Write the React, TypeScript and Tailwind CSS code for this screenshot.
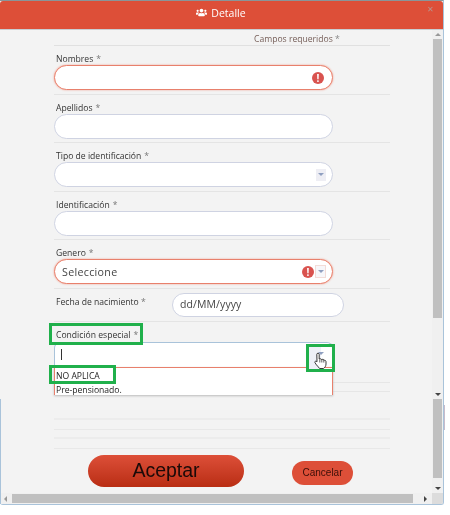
import { FaUsers } from "react-icons/fa";

const font = { fontFamily: '"Open Sans", "Noto Sans", sans-serif' };

function Arrow({ light }: { light?: boolean }) {
  return (
    <span className={`flex h-[12px] w-[10px] items-center justify-center ${light ? "bg-[#eeeef4]" : ""}`}>
      <span className="h-0 w-0 border-x-[3px] border-t-[3px] border-x-transparent border-t-[#8f9fc0]" />
    </span>
  );
}

function Alert() {
  return (
    <span className="flex h-[12px] w-[12px] items-center justify-center rounded-full bg-[#d9534f] text-[10px] font-bold leading-none text-white">
      !
    </span>
  );
}

function Input({ error, children }: { error?: boolean; children?: React.ReactNode }) {
  return (
    <div
      className={`flex h-[25px] w-[279px] items-center justify-end rounded-[13px] border bg-white pr-[6px] ${
        error ? "border-[#e8806c] shadow-[0_0_2px_#ef9a8a]" : "border-[#cfd3e2]"
      }`}
    >
      {children}
    </div>
  );
}

function Row({ label, children }: { label: string; children: React.ReactNode }) {
  return (
    <div className="flex h-[48.6px] flex-col border-b border-[#e4e4e4]">
      <div className="flex h-[19px] items-end pl-[2px] text-[8.6px] leading-[12px] text-[#333]">
        {label} <span className="ml-[3px] text-[#777]">*</span>
      </div>
      {children}
    </div>
  );
}

function VArrow({ down }: { down?: boolean }) {
  return (
    <div className="flex h-[9px] items-center justify-center">
      <span
        className={`h-0 w-0 border-x-[3px] border-x-transparent ${
          down ? "border-t-[3px] border-t-[#444]" : "border-b-[3px] border-b-[#999]"
        }`}
      />
    </div>
  );
}

export default function App() {
  return (
    <div className="relative h-[515px] w-[450px] overflow-hidden bg-white blur-[0.4px]" style={font}>
      <div className="flex h-[505px] w-[444px] flex-col overflow-hidden rounded-b-[3px] border-b border-r border-t border-b-[#a9c3da] border-r-[#a9c3da] border-t-[#8a9599] bg-[#f3f3f3]">
        <div className="relative flex h-[29px] shrink-0 items-center justify-center rounded-t-[3px] border-b border-b-[#c9ced2] bg-[#dd4f38] pb-[2px] pr-[1px] text-[10.5px] text-white">
          <FaUsers className="mr-[4px] mt-[-3px] h-[11px] w-[11px]" />
          <span>Detalle</span>
          <span className="absolute right-[9px] top-[4px] text-[8px] leading-none text-[#b9938c]">✕</span>
        </div>

        <div className="flex min-h-0 flex-1">
          <div className="min-w-0 flex-1 pl-[54px] pr-[42px]">
            <div className="h-[16px] border-b border-[#e0e0e0] pl-[200px] text-[8.6px] leading-[18px] text-[#77605a]">
              Campos requeridos <span className="text-[#888]">*</span>
            </div>

            <Row label="Nombres">
              <Input error>
                <Alert />
                <span className="w-[2px]" />
              </Input>
            </Row>
            <Row label="Apellidos">
              <Input />
            </Row>
            <Row label="Tipo de identificación">
              <Input>
                <Arrow light />
              </Input>
            </Row>
            <Row label="Identificación">
              <Input />
            </Row>
            <Row label="Genero">
              <Input error>
                <span className="flex-1 pl-[7px] text-[10.7px] leading-[20px] tracking-[0.3px] text-[#444]">Seleccione</span>
                <Alert />
                <span className="ml-[1px] flex h-[13px] w-[11px] items-center justify-center border border-[#f3dcd8] bg-[#f7f7fa]">
                  <Arrow />
                </span>
              </Input>
            </Row>

            <div className="flex h-[33px] items-start border-b border-[#e4e4e4] pl-[2px]">
              <span className="mt-[7px] w-[116px] text-[8.6px] leading-[12px] text-[#333]">
                Fecha de nacimiento <span className="text-[#777]">*</span>
              </span>
              <div className="mt-[4px] flex h-[24px] w-[172px] items-center rounded-[12px] border border-[#cfd3e2] bg-white pl-[7px] text-[10.5px] tracking-[0.1px] text-[#444]">
                dd/MM/yyyy
              </div>
            </div>

            <div className="relative h-[61px] border-b border-[#e6e6e6]">
              <div className="flex h-[19px] items-end pl-[2px] text-[8.6px] leading-[12px] text-[#333]">
                Condición especial <span className="ml-[3px] text-[#777]">*</span>
              </div>
              <div className="mt-[1px] h-[25px] w-[279px] rounded-t-[6px] border border-b-0 border-[#a9c3da] bg-white pl-[6px] pt-[6px]">
                <div className="h-[11px] w-px bg-[#333]" />
              </div>
              <div className="absolute left-0 top-[45px] z-10 h-[28px] w-[279px] border-x border-t border-x-[#e8806c] border-t-[#e8806c] bg-white pl-[1px] pt-px text-[8.6px] leading-[14px] text-[#222] shadow-[0_1px_2px_#bbb]">
                <div>NO APLICA</div>
                <div>Pre-pensionado.</div>
              </div>
              {/* green highlights */}
              <div className="absolute left-[-5px] top-[1px] h-[22px] w-[94px] border-[3px] border-[#20b04b]" />
              <div className="absolute left-[-5px] top-[43px] z-20 h-[19px] w-[67px] border-[3px] border-[#20b04b]" />
              <div className="absolute left-[252px] top-[22px] z-20 h-[28px] w-[29px] border-[3px] border-[#20b04b]">
                <div className="absolute left-[0px] top-0 h-full w-[12px] bg-[#eef1f8]" />
                <div className="absolute left-[7px] top-[1px]">
                  <Arrow />
                </div>
                <svg className="absolute left-[5px] top-[5px]" width="14" height="17" viewBox="0 0 14 17">
                  <path
                    d="M4 1.2c.7 0 1.2.5 1.2 1.2V7l1-.2c.5 0 1 .2 1.2.6.5-.3 1.3-.2 1.6.3.6-.2 1.3 0 1.6.6.7 0 1.4.5 1.4 1.3v2.4c0 2-1 3.5-2.6 4.5H5.6c-.6-1-2-2.2-3.2-3.7L1 10.7c-.4-.6 0-1.4.6-1.5.5-.1 1 .1 1.4.6l-.2-7.4c0-.7.5-1.2 1.2-1.2z"
                    fill="#fff"
                    stroke="#222"
                    strokeWidth="0.9"
                  />
                  <path d="M5.8 7.5v3M7.8 7.5v3M9.8 8v2.6" stroke="#222" strokeWidth="0.7" fill="none" />
                </svg>
              </div>
            </div>

            <div className="h-[9px] border-b border-[#e6e6e6]" />
            <div className="h-[28px] border-b-2 border-[#ececec]" />
            <div className="h-[10px] border-b border-[#e8e8e8]" />
            <div className="h-[9px] border-b-2 border-[#ececec]" />
            <div className="h-[10px] border-b border-[#e8e8e8]" />

            <div className="flex items-start pt-[6px]">
              <button className="ml-[34px] flex h-[32px] w-[156px] items-center justify-center rounded-[16px] bg-gradient-to-b from-[#dd4f38] to-[#b92d12] text-[19.5px] leading-none text-[#1a0a08] [font-family:'Liberation_Sans',sans-serif]">
                Aceptar
              </button>
              <button className="ml-[48px] mt-[6px] flex h-[24px] w-[61px] items-center justify-center rounded-[12px] bg-[#dd4f38] text-[10px] leading-none text-[#3a0f08] [font-family:'Liberation_Sans',sans-serif]">
                Cancelar
              </button>
            </div>
          </div>

          <div className="flex w-[11px] shrink-0 flex-col bg-[#f0f0f0] px-[1px]">
            <VArrow />
            <div className="h-[279px] bg-[#c0c0c0]" />
            <div className="flex-1" />
            <VArrow down />
            <div className="h-[79px] bg-[#c0c0c0]" />
            <div className="h-[6px]" />
            <VArrow down />
          </div>
        </div>

        <div className="flex h-[11px] shrink-0 items-center bg-[#f0f0f0]">
          <span className="ml-[4px] h-0 w-0 border-y-[3px] border-r-[3px] border-y-transparent border-r-[#999]" />
          <div className="ml-[5px] h-[9px] w-[401px] bg-[#c0c0c0]" />
          <span className="ml-[11px] h-0 w-0 border-y-[3px] border-l-[3px] border-y-transparent border-l-[#444]" />
          <div className="ml-auto h-[11px] w-[11px] bg-[#dcdcdc]" />
        </div>
      </div>
      <div className="absolute left-0 top-[399px] h-[105px] w-px bg-[#a9c3da]" />
      <div className="absolute left-[444px] top-[405px] h-[25px] w-px bg-[#c9bccb]" />
    </div>
  );
}
